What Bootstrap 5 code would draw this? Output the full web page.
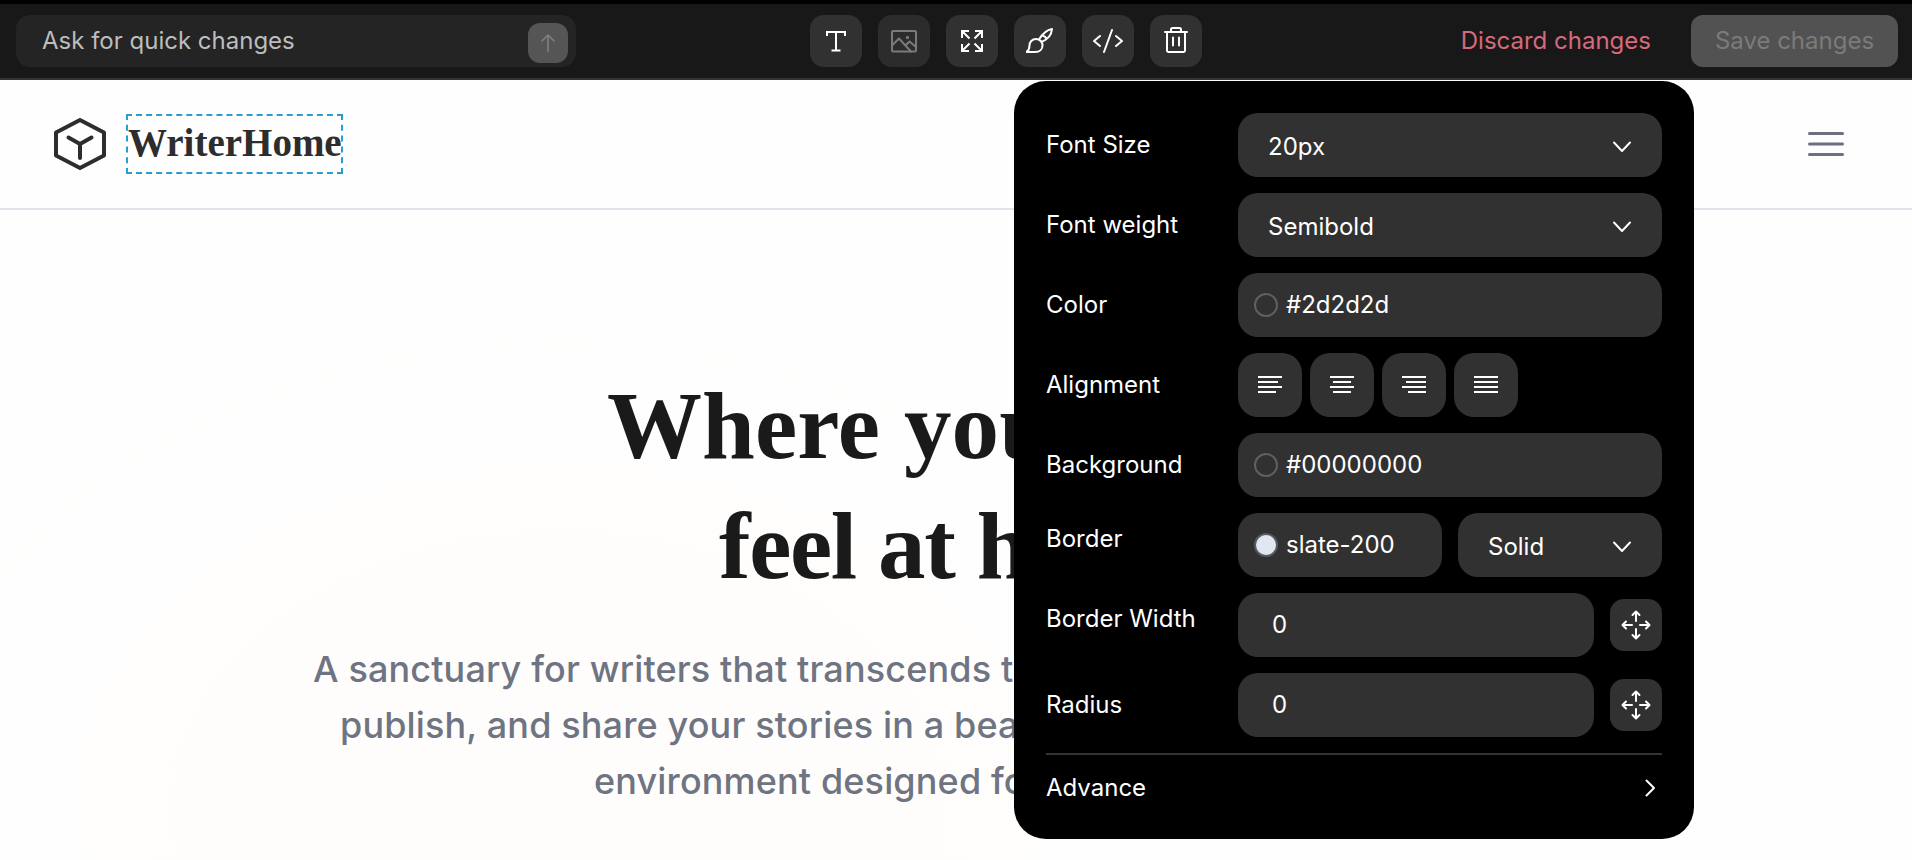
<!DOCTYPE html>
<html lang="en">
<head>
<meta charset="utf-8">
<meta name="viewport" content="width=device-width, initial-scale=1">
<title>WriterHome editor</title>
<link href="https://cdn.jsdelivr.net/npm/bootstrap@5.3.0/dist/css/bootstrap.min.css" rel="stylesheet">
<style>
  body { font-family: Inter, "Liberation Sans", sans-serif; font-size: 24px; line-height: 32px; height: 860px; overflow: hidden; background: #fefefe; }
  svg { display: block; flex: none; fill: none; stroke: currentColor; stroke-linecap: round; stroke-linejoin: round; }
  .sharp { stroke-linecap: butt; stroke-linejoin: miter; }
  .toolbar { height: 80px; background: #181818; border-top: 4px solid #000; border-bottom: 2px solid #333; padding: 11px 14px 11px 16px; }
  .ask { width: 560px; height: 52px; background: #242424; border-radius: 14px; padding: 0 8px 0 26px; color: #bdbdbd; }
  .send { width: 40px; height: 40px; margin-top: 4px; border-radius: 12px; background: #555; color: #808080; }
  .tools { margin-left: 234px; gap: 16px; }
  .tool { width: 52px; height: 52px; border: 0; border-radius: 14px; background: #313131; color: #fff; padding: 0; }
  .tool.off { background: #2c2c2c; color: #7a7a7a; }
  .discard { color: #d9697c; margin-right: 40px; }
  .save { width: 207px; height: 52px; border-radius: 12px; background: #525252; color: #7b7b7b; }
  .site-head { height: 130px; border-bottom: 2px solid #e0e5ec; padding: 0 68px 0 54px; }
  .brand-name { margin-left: 20px; width: 217px; height: 60px; border: 2px dashed #2a9bd3; color: #2d2d2d; font: 700 39px/54px "Liberation Serif", serif; white-space: nowrap; }
  .menu { color: #6b7080; }
  .hero { height: 650px; padding-top: 156px; background: radial-gradient(ellipse 700px 500px at 560px 600px, #fefdfb 20%, #fefefe 100%); white-space: nowrap; }
  .hero h1 { margin: 0; font: 700 95px/120px "Liberation Serif", serif; color: #1a1a1a; }
  .hero p { margin: 35px 0 0; font-size: 36px; line-height: 56px; font-weight: 500; letter-spacing: .14px; color: #6e7482; }
  .l1 { padding-left: 607px; letter-spacing: .1px; } .l2 { padding-left: 719px; letter-spacing: -1.4px; }
  .p1 { padding-left: 313px; } .p2 { padding-left: 340px; } .p3 { padding-left: 594px; }
  .panel { position: absolute; left: 1014px; top: 81px; width: 680px; height: 758px; padding: 32px; border-radius: 32px; background: #000; color: #fff; }
  .prop { height: 64px; margin-bottom: 16px; }
  .prop-label { width: 192px; flex: none; white-space: nowrap; }
  .raised { padding-bottom: 13px; }
  .field { height: 64px; border-radius: 20px; background: #313131; flex: 1 1 0; min-width: 0; }
  .half { flex: none; width: 204px; }
  .pick { padding: 3px 31px 0 30px; }
  .hue { padding: 0 16px; gap: 8px; }
  .num { padding-left: 34px; }
  .dot { width: 24px; height: 24px; border: 2px solid #606060; border-radius: 50%; }
  .dot.slate { background: #e2e6f1; border-color: #565b63; }
  .align-btn { width: 64px; height: 64px; border: 0; border-radius: 20px; background: #313131; color: #fff; padding: 0; }
  .advance { border-top: 2px solid #333; height: 54px; padding: 13px 6px 0 0; }
</style>
</head>
<body>
<header class="toolbar d-flex align-items-center">
  <div class="ask d-flex align-items-center justify-content-between"><span>Ask for quick changes</span>
    <span class="send d-flex align-items-center justify-content-center"><svg width="16" height="20" stroke-width="1.6"><path d="M8 18.500V2M2 8l6-6 6 6"/></svg></span></div>
  <div class="tools d-flex">
    <button class="tool d-flex align-items-center justify-content-center"><svg class="sharp" width="28" height="28" stroke-width="2"><path d="M5 9V5h18v4M14 5v18M9.500 23.500h9"/></svg></button>
    <button class="tool off d-flex align-items-center justify-content-center"><svg width="28" height="28" stroke-width="2"><rect x="2" y="4" width="24" height="20.500" rx="1"/><path d="M2 18.500l7-7 12 13M15.500 18.500l4-4L26 20"/><circle cx="17.500" cy="10.500" r=".7"/></svg></button>
    <button class="tool d-flex align-items-center justify-content-center"><svg class="sharp" width="28" height="28" stroke-width="2"><path d="M4 11V4h7M4 4l7.500 7.500M17 4h7v7M24 4l-7.500 7.500M4 17v7h7M4 24l7.500-7.500M24 17v7h-7M24 24l-7.500-7.500"/></svg></button>
    <button class="tool d-flex align-items-center justify-content-center"><svg width="28" height="28" stroke-width="2"><path d="M.5 25h8.500c5 0 7.500-3 7.500-6.500s-2.500-6.500-6.500-6.500S3.500 15 3.500 18.500C3.500 21.500 2.500 23.500.5 25zM13 12.500c3-5 7.500-9.500 13-10.500-.5 5.500-4 10.500-10.500 13M16.500 8.500c2 .5 3.500 2 4 3.500"/></svg></button>
    <button class="tool d-flex align-items-center justify-content-center"><svg width="32" height="28" stroke-width="2"><path d="M8 9l-6 5 6 5M24 9l6 5-6 5M20 3l-8 22"/></svg></button>
    <button class="tool d-flex align-items-center justify-content-center"><svg width="28" height="28" stroke-width="2"><path d="M3 5h22M5 5v18.500a1.500 1.500 0 0 0 1.500 1.500h15a1.500 1.500 0 0 0 1.500-1.500V5M9 5V2.500A1.500 1.500 0 0 1 10.500 1h7A1.500 1.500 0 0 1 19 2.500V5M11 10.500v8M17 10.500v8"/></svg></button>
  </div>
  <span class="discard ms-auto">Discard changes</span>
  <span class="save d-flex align-items-center justify-content-center">Save changes</span>
</header>

<div class="site-head d-flex align-items-center">
  <svg width="52" height="54" viewBox="0 0 52 54" stroke-width="4" color="#2d2d2d"><path d="M26 3l24 12.500v23L26 51 2 38.500v-23zM14.500 20.500L26 27l11.500-6.500M26 27v14"/></svg>
  <div class="brand-name">WriterHome</div>
  <svg class="menu ms-auto" width="36" height="26" stroke-width="3"><path d="M1.500 2.500h33M1.500 13h33M1.500 23.500h33"/></svg>
</div>

<main class="hero">
  <h1><div class="l1">Where you</div><div class="l2">feel at h</div></h1>
  <p><span class="d-block p1">A sanctuary for writers that transcends t</span><span class="d-block p2">publish, and share your stories in a bea</span><span class="d-block p3">environment designed fo</span></p>
</main>

<aside class="panel">
  <div class="prop d-flex align-items-center"><span class="prop-label">Font Size</span><div class="field pick d-flex align-items-center justify-content-between"><span>20px</span><svg width="18" height="12" stroke-width="1.9"><path d="M1 1.500l8 8.500 8-8.500"/></svg></div></div>
  <div class="prop d-flex align-items-center"><span class="prop-label">Font weight</span><div class="field pick d-flex align-items-center justify-content-between"><span>Semibold</span><svg width="18" height="12" stroke-width="1.9"><path d="M1 1.500l8 8.500 8-8.500"/></svg></div></div>
  <div class="prop d-flex align-items-center"><span class="prop-label">Color</span><div class="field hue d-flex align-items-center"><i class="dot"></i><span>#2d2d2d</span></div></div>
  <div class="prop d-flex align-items-center"><span class="prop-label">Alignment</span><div class="d-flex gap-2">
    <button class="align-btn d-flex align-items-center justify-content-center"><svg class="sharp" width="24" height="18" stroke-width="2"><path d="M0 1h24M0 6h20M0 11h24M0 16h18"/></svg></button>
    <button class="align-btn d-flex align-items-center justify-content-center"><svg class="sharp" width="24" height="18" stroke-width="2"><path d="M0 1h24M3 6h18M0 11h24M3 16h18"/></svg></button>
    <button class="align-btn d-flex align-items-center justify-content-center"><svg class="sharp" width="24" height="18" stroke-width="2"><path d="M0 1h24M4 6h20M0 11h24M6 16h18"/></svg></button>
    <button class="align-btn d-flex align-items-center justify-content-center"><svg class="sharp" width="24" height="18" stroke-width="2"><path d="M0 1h24M0 6h24M0 11h24M0 16h24"/></svg></button></div></div>
  <div class="prop d-flex align-items-center"><span class="prop-label">Background</span><div class="field hue d-flex align-items-center"><i class="dot"></i><span>#00000000</span></div></div>
  <div class="prop d-flex align-items-center"><span class="prop-label raised">Border</span><div class="d-flex gap-3"><div class="field half hue d-flex align-items-center"><i class="dot slate"></i><span>slate-200</span></div><div class="field half pick d-flex align-items-center justify-content-between"><span>Solid</span><svg width="18" height="12" stroke-width="1.9"><path d="M1 1.500l8 8.500 8-8.500"/></svg></div></div></div>
  <div class="prop d-flex align-items-center"><span class="prop-label raised">Border Width</span><div class="field num d-flex align-items-center me-3">0</div><button class="tool d-flex align-items-center justify-content-center"><svg width="30" height="30" stroke-width="2"><path d="M15 11V2M11.500 5L15 1.500 18.500 5M15 19v9M11.500 25l3.500 3.500 3.500-3.500M11 15H2M5 11.500L1.500 15 5 18.500M19 15h9M25 11.500l3.500 3.500-3.500 3.500"/></svg></button></div>
  <div class="prop d-flex align-items-center"><span class="prop-label">Radius</span><div class="field num d-flex align-items-center me-3">0</div><button class="tool d-flex align-items-center justify-content-center"><svg width="30" height="30" stroke-width="2"><path d="M15 11V2M11.500 5L15 1.500 18.500 5M15 19v9M11.500 25l3.500 3.500 3.500-3.500M11 15H2M5 11.500L1.500 15 5 18.500M19 15h9M25 11.500l3.500 3.500-3.500 3.500"/></svg></button></div>
  <div class="advance d-flex align-items-center justify-content-between"><span>Advance</span><svg width="11" height="18" stroke-width="2"><path d="M1.500 1.500L9 9l-7.500 7.500"/></svg></div>
</aside>
</body>
</html>
